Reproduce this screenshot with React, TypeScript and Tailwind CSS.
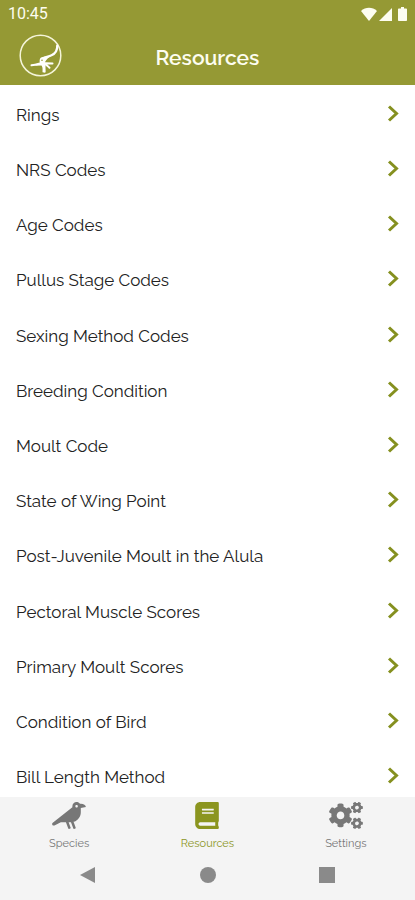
import type React from 'react';
import { FaBook, FaCogs, FaCrow } from 'react-icons/fa';

const resources = [
  'Rings',
  'NRS Codes',
  'Age Codes',
  'Pullus Stage Codes',
  'Sexing Method Codes',
  'Breeding Condition',
  'Moult Code',
  'State of Wing Point',
  'Post-Juvenile Moult in the Alula',
  'Pectoral Muscle Scores',
  'Primary Moult Scores',
  'Condition of Bird',
  'Bill Length Method',
];

const tabs = [
  { name: 'Species', icon: FaCrow, active: false },
  { name: 'Resources', icon: FaBook, active: true },
  { name: 'Settings', icon: FaCogs, active: false },
];

const StatusBar: React.FC = () => (
  <div className="flex h-7 items-center justify-between px-2 font-['Roboto',sans-serif] text-base text-[#fdfdf0]">
    <span>10:45</span>
    <div className="flex items-center gap-0.5">
      <svg className="h-[14px] w-4" viewBox="0 0 16 14" fill="currentColor" aria-hidden="true">
        <path d="M8 14 0 4C4.500-.3 11.500-.3 16 4Z" />
      </svg>
      <svg className="h-[13px] w-[13px]" viewBox="0 0 13 13" fill="currentColor" aria-hidden="true">
        <path d="M13 0V13H0Z" />
      </svg>
      <svg className="ml-1 h-[14px] w-[9px]" viewBox="0 0 9 14" fill="currentColor" aria-hidden="true">
        <path d="M3 0h3v1.500h2.200a.8.8 0 0 1 .8.8v10.900a.8.8 0 0 1-.8.8H.8a.8.8 0 0 1-.8-.8V2.300a.8.8 0 0 1 .8-.8H3Z" />
      </svg>
    </div>
  </div>
);

const Logo: React.FC = () => (
  <svg className="h-[43px] w-[43px]" viewBox="0 0 43 43" fill="none" aria-hidden="true">
    <circle cx="21.500" cy="21.500" r="20.300" stroke="#f4f4d8" strokeWidth="1.500" />
    <path d="M38.200 11.500C38.500 16.500 36.500 19.500 32.500 21.300C29.500 22.700 27 23 24 24.300" stroke="#fff" strokeWidth="2.200" strokeLinecap="round" />
    <path d="M33 21.200C29.500 24 27.500 24.500 25.500 29.500L21 29.500C20.300 27 20.500 24.500 22 23.500C24 22.400 29 22.500 33 21.200Z" fill="#fff" />
    <path d="M12.500 31.300C16 31 19 30 22.500 29L27 29.200L33.500 29.500M24 29.500C25.300 32 25.300 34.500 25.300 37.500M26 29.500C27.500 31.500 29.300 32.500 30.500 33.800" stroke="#fff" strokeWidth="2" strokeLinecap="round" />
    <path d="M22.500 31.500C24 33.500 23.500 36 23.500 38.300L26.500 38.600L26.500 30L21 29.500L15.500 31.800Z" fill="#fff" />
    <circle cx="23" cy="26.300" r=".8" fill="#959934" />
  </svg>
);

const App: React.FC = () => {
  return (
    <div className="flex h-screen flex-col bg-white font-['Raleway','Lato',sans-serif]">
      <header className="h-[85px] shrink-0 bg-[#959934]">
        <StatusBar />
        <div className="grid grid-cols-[1fr_auto_1fr] items-center px-[19px] pt-1.5">
          <Logo />
          <h1 className="pt-1 text-[21px] font-semibold leading-7 text-[#fdfdf0]">Resources</h1>
        </div>
      </header>

      <main className="flex-1 overflow-y-auto pt-0.5 [scrollbar-width:none]">
        <ul className="grid min-h-[718px] auto-rows-fr">
          {resources.map((name) => (
            <li key={name}>
              <button type="button" className="flex h-full w-full items-center justify-between px-4 text-left">
                <span className="text-[17px] leading-6 text-[#222]">{name}</span>
                <svg className="h-5 w-3 text-[#85901f]" viewBox="0 0 12 20" fill="none" aria-hidden="true">
                  <path d="M2 1.500 9.500 8.500 2 15.500" stroke="currentColor" strokeWidth="3" />
                </svg>
              </button>
            </li>
          ))}
        </ul>
      </main>

      <footer className="h-[103px] shrink-0 bg-[#f4f4f4]">
        <nav className="grid grid-cols-3">
          {tabs.map(({ name, icon: Icon, active }) => (
            <button
              key={name}
              type="button"
              className={`flex flex-col items-center gap-[7px] pt-[5px] ${active ? 'text-[#8b951f]' : 'text-[#777]'}`}
            >
              <Icon className="h-[27px] w-[34px]" />
              <span className="text-[11px] leading-4">{name}</span>
            </button>
          ))}
        </nav>
        <div className="flex items-center justify-between px-20 pt-[15px] text-[#8a8a8a]">
          <button type="button" aria-label="Back">
            <svg className="h-4 w-4" viewBox="0 0 16 16" fill="currentColor">
              <path d="M15 0V16L0 8Z" />
            </svg>
          </button>
          <button type="button" aria-label="Home" className="h-4 w-4 rounded-full bg-current" />
          <button type="button" aria-label="Overview" className="h-4 w-4 bg-current" />
        </div>
      </footer>
    </div>
  );
};

export default App;
